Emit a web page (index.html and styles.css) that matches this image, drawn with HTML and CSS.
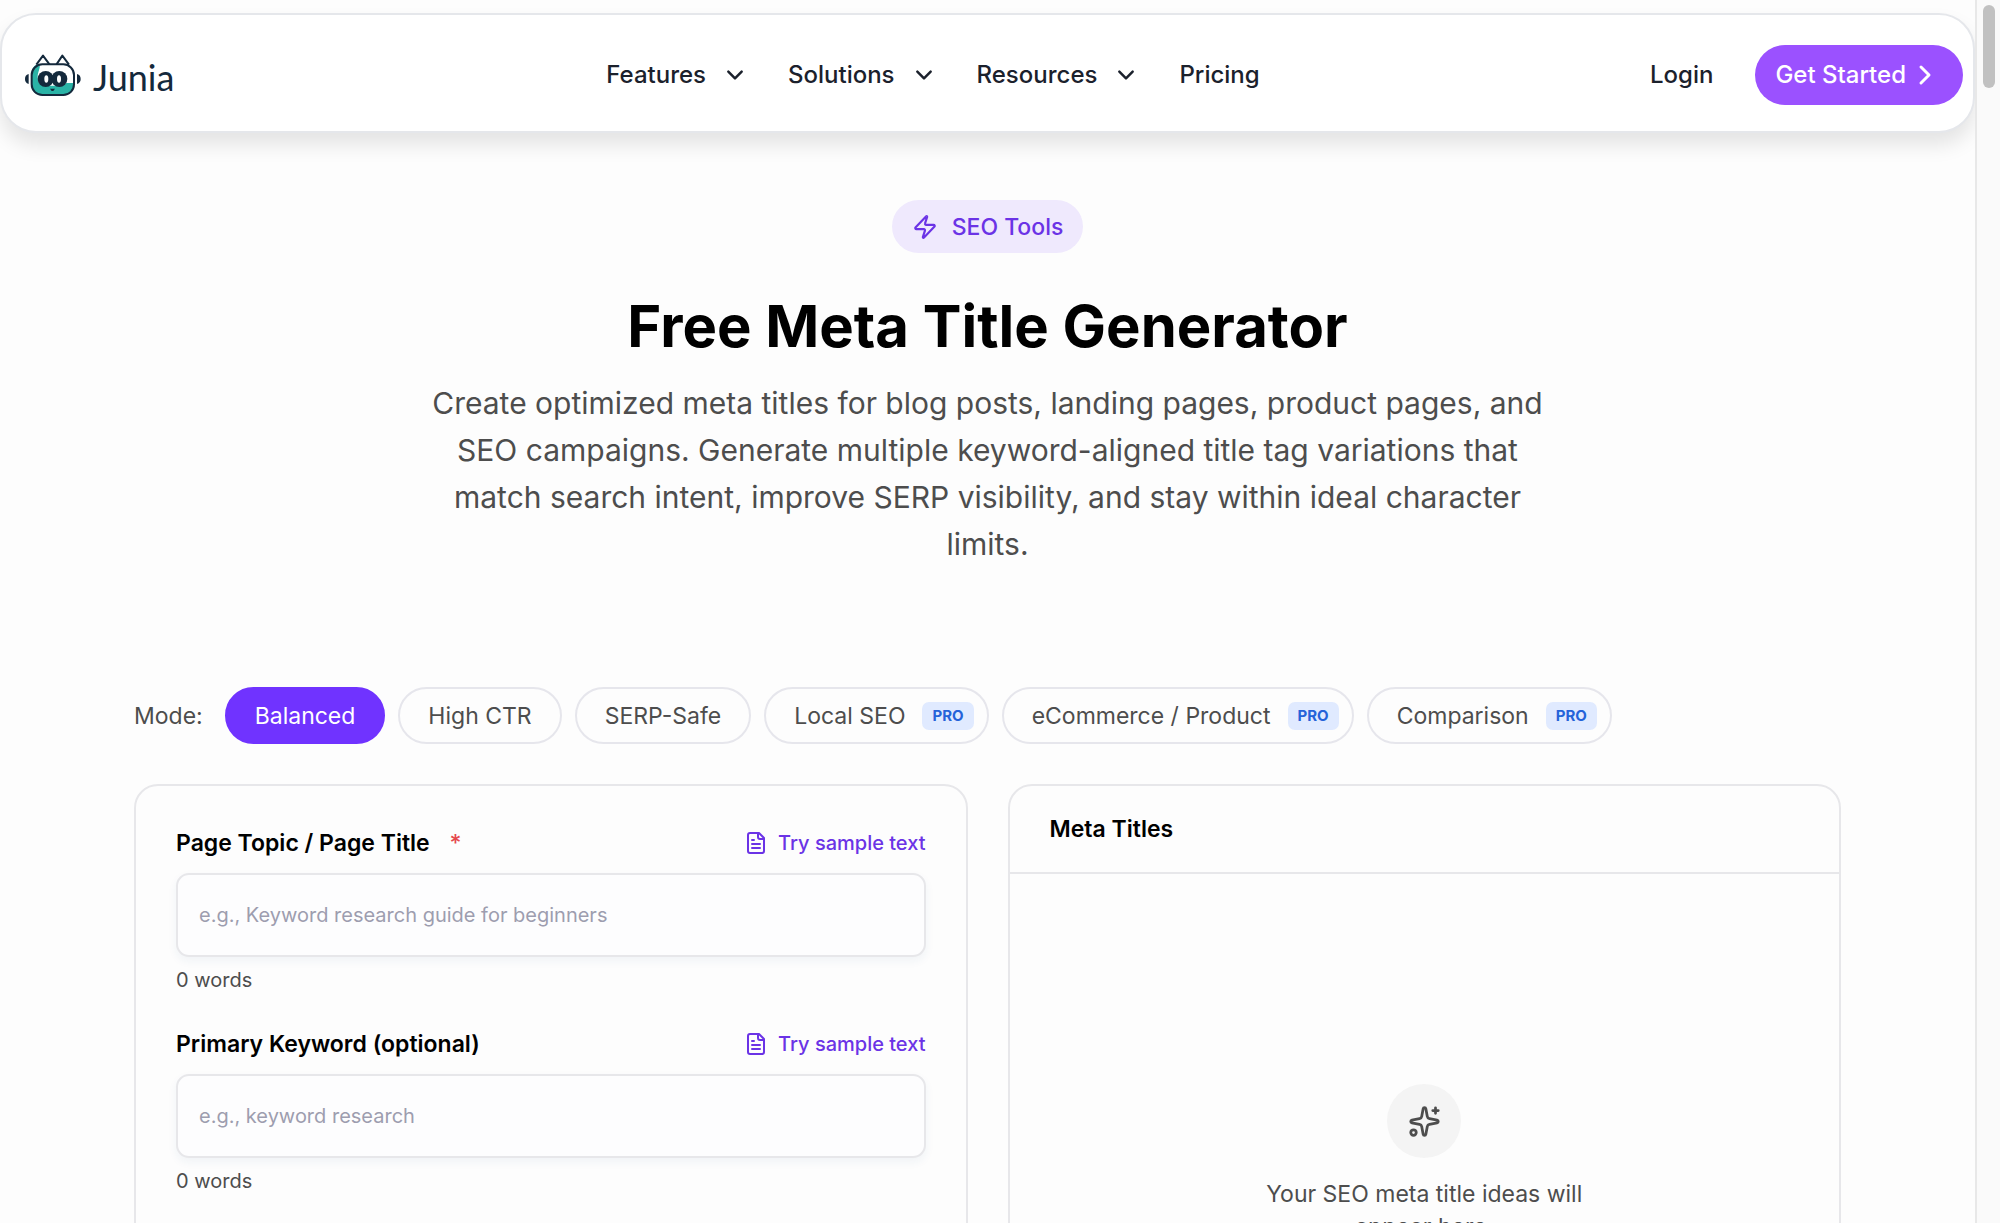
FILE: index.html
```html
<!DOCTYPE html>
<html lang="en">
<head>
  <meta charset="utf-8">
  <meta name="viewport" content="width=device-width, initial-scale=1">
  <title>Free Meta Title Generator</title>
  <link rel="stylesheet" href="styles.css">
</head>
<body>
  <!-- shared icons -->
  <svg class="sprite" aria-hidden="true">
    <symbol id="chevron-down" viewBox="0 0 24 24"><path d="M4 8l8 8 8-8"/></symbol>
    <symbol id="file-text" viewBox="0 0 24 24">
      <path d="M15 2H6a2 2 0 0 0-2 2v16a2 2 0 0 0 2 2h12a2 2 0 0 0 2-2V7Z"/>
      <path d="M14 2v4a2 2 0 0 0 2 2h4"/>
      <path d="M10 9H8M16 13H8M16 17H8"/>
    </symbol>
  </svg>

  <div class="page">
    <header class="header">
      <a href="#" class="logo">
        <svg class="logo-icon" viewBox="0 0 168 126" aria-hidden="true">
          <path d="M34 32L54 5l20 27M94 32l18-27 20 27" fill="#fff" stroke="#14293c" stroke-width="6" stroke-linejoin="round"/>
          <rect x="20" y="31" width="127" height="92" rx="32" fill="#fff"/>
          <path d="M44 31C28 32 20 42 20 60v33c0 20 12 30 32 30h63c20 0 32-10 32-32v-4h-20c-8 0-10 8-20 8H60C44 95 38 84 38 68c0-14 8-22 6-37z" fill="#2ab3a6"/>
          <rect x="20" y="31" width="127" height="92" rx="32" fill="none" stroke="#14293c" stroke-width="6"/>
          <circle cx="62" cy="75" r="24" fill="#14293c"/>
          <circle cx="103" cy="75" r="24" fill="#14293c"/>
          <ellipse cx="64" cy="75" rx="6" ry="11" fill="#fff"/>
          <ellipse cx="102" cy="75" rx="6" ry="11" fill="#fff"/>
          <path d="M75 104h15l-5 7h-5z" fill="#14293c"/>
          <path d="M11 60C3 62 0 68 0 75s3 13 11 15zM156 60c8 2 11 8 11 15s-3 13-11 15z" fill="#14293c"/>
        </svg>
        <span class="logo-text">Junia</span>
      </a>

      <nav class="nav">
        <button type="button" class="nav-item">Features <svg class="icon chevron"><use href="#chevron-down"/></svg></button>
        <button type="button" class="nav-item">Solutions <svg class="icon chevron"><use href="#chevron-down"/></svg></button>
        <button type="button" class="nav-item">Resources <svg class="icon chevron"><use href="#chevron-down"/></svg></button>
        <a href="#" class="nav-item">Pricing</a>
      </nav>

      <div class="account">
        <a href="#" class="login">Login</a>
        <a href="#" class="get-started">Get Started
          <svg class="icon arrow" viewBox="0 0 24 24"><path d="M8 4l8 8-8 8"/></svg>
        </a>
      </div>
    </header>

    <main class="main">
      <section class="hero">
        <a href="#" class="badge">
          <svg class="icon bolt" viewBox="0 0 24 24"><path d="M4 14a1 1 0 0 1-.78-1.63l9.9-10.2a.5.5 0 0 1 .86.46l-1.92 6.02A1 1 0 0 0 13 10h7a1 1 0 0 1 .78 1.63l-9.9 10.2a.5.5 0 0 1-.86-.46l1.92-6.02A1 1 0 0 0 11 14z"/></svg>
          SEO Tools
        </a>
        <h1>Free Meta Title Generator</h1>
        <p>Create optimized meta titles for blog posts, landing pages, product pages, and SEO campaigns. Generate multiple keyword-aligned title tag variations that match search intent, improve SERP visibility, and stay within ideal character limits.</p>
      </section>

      <div class="modes">
        <span class="modes-label">Mode:</span>
        <button type="button" class="mode active">Balanced</button>
        <button type="button" class="mode">High CTR</button>
        <button type="button" class="mode">SERP-Safe</button>
        <button type="button" class="mode mode-pro">Local SEO <span class="pro">PRO</span></button>
        <button type="button" class="mode mode-pro">eCommerce / Product <span class="pro">PRO</span></button>
        <button type="button" class="mode mode-pro">Comparison <span class="pro">PRO</span></button>
      </div>

      <div class="panels">
        <form class="panel form-panel">
          <div class="field">
            <div class="field-head">
              <label for="topic">Page Topic / Page Title <span class="required">*</span></label>
              <button type="button" class="sample"><svg class="icon file"><use href="#file-text"/></svg>Try sample text</button>
            </div>
            <input type="text" id="topic" name="topic" placeholder="e.g., Keyword research guide for beginners" required>
            <div class="count">0 words</div>
          </div>
          <div class="field">
            <div class="field-head">
              <label for="keyword">Primary Keyword (optional)</label>
              <button type="button" class="sample"><svg class="icon file"><use href="#file-text"/></svg>Try sample text</button>
            </div>
            <input type="text" id="keyword" name="keyword" placeholder="e.g., keyword research">
            <div class="count">0 words</div>
          </div>
        </form>

        <section class="panel">
          <h2>Meta Titles</h2>
          <div class="empty">
            <div class="empty-icon">
              <svg class="icon sparkle" viewBox="0 0 24 24">
                <path d="M11.017 2.814a1 1 0 0 1 1.966 0l1.051 5.558a2 2 0 0 0 1.594 1.594l5.558 1.051a1 1 0 0 1 0 1.966l-5.558 1.051a2 2 0 0 0-1.594 1.594l-1.051 5.558a1 1 0 0 1-1.966 0l-1.051-5.558a2 2 0 0 0-1.594-1.594l-5.558-1.051a1 1 0 0 1 0-1.966l5.558-1.051a2 2 0 0 0 1.594-1.594z"/>
                <path d="M20 2v4M22 4h-4"/>
                <circle cx="4" cy="20" r="2"/>
              </svg>
            </div>
            <p>Your SEO meta title ideas will appear here.</p>
          </div>
        </section>
      </div>
    </main>
  </div>

  <div class="scrollbar"><div class="thumb"></div></div>
</body>
</html>
```

FILE: styles.css
```css
* {
  box-sizing: border-box;
}

body {
  display: flex;
  height: 100vh;
  margin: 0;
  overflow: hidden;
  background: #fdfdfd;
  color: #000;
  font-family: Inter, sans-serif;
  font-size: 23px;
  line-height: 32px;
}

a {
  color: inherit;
  text-decoration: none;
}

button {
  padding: 0;
  border: none;
  background: none;
  color: inherit;
  font: inherit;
  cursor: pointer;
}

.sprite {
  display: none;
}

.icon {
  flex: none;
  width: 24px;
  height: 24px;
  fill: none;
  stroke: currentColor;
  stroke-width: 2;
  stroke-linecap: round;
  stroke-linejoin: round;
}

.page {
  flex: 1;
  min-width: 0;
  padding-top: 13px;
}

/* header */
.header {
  display: flex;
  align-items: center;
  justify-content: space-between;
  height: 120px;
  padding: 4px 10px 0 23px;
  border: 2px solid #e5e7eb;
  border-radius: 36px;
  background: #fff;
  box-shadow: 0 12px 20px rgba(0, 0, 0, 0.1);
  color: #1b212c;
  font-size: 24px;
  font-weight: 500;
}

.logo {
  display: flex;
  align-items: flex-end;
  gap: 12px;
  min-width: 234px;
}

.logo-icon {
  width: 56px;
  height: 42px;
}

.logo-text {
  color: #14293c;
  font-family: Lato, sans-serif;
  font-size: 36px;
  font-weight: 400;
  line-height: 38px;
}

.nav {
  display: flex;
}

.nav-item {
  display: flex;
  align-items: center;
  gap: 19px;
  padding-right: 43px;
}

.chevron {
  width: 20px;
  height: 20px;
  stroke-width: 3;
}

.account {
  display: flex;
  align-items: center;
  gap: 42px;
}

.get-started {
  display: flex;
  align-items: center;
  gap: 7px;
  height: 60px;
  padding: 0 26px 0 20px;
  border-radius: 30px;
  background: #9b51ff;
  color: #fff;
}

.arrow {
  stroke-width: 3;
}

/* hero */
.main {
  padding: 67px 134px 0;
}

.hero {
  display: flex;
  flex-direction: column;
  align-items: center;
  max-width: 1120px;
  margin: 0 auto 119px;
  text-align: center;
}

.badge {
  display: flex;
  align-items: center;
  gap: 14px;
  height: 53px;
  padding: 0 20px;
  border-radius: 27px;
  background: #efe9fd;
  color: #6b33e6;
  font-weight: 500;
}

.bolt {
  width: 26px;
  height: 26px;
}

h1 {
  margin: 36px 0 16px;
  font-size: 58px;
  font-weight: 700;
  line-height: 75px;
}

.hero p {
  margin: 0;
  color: #4d4d4d;
  font-size: 30px;
  line-height: 47px;
}

/* modes */
.modes {
  display: flex;
  flex-wrap: wrap;
  align-items: center;
  gap: 13px;
  margin-bottom: 40px;
  color: #4d4d4d;
}

.modes-label {
  margin-right: 9px;
}

.mode {
  display: flex;
  align-items: center;
  gap: 17px;
  height: 57px;
  padding: 0 28px;
  border: 2px solid #e6e6ec;
  border-radius: 29px;
}

.mode-pro {
  padding-right: 13px;
}

.active {
  border-color: #7033ff;
  background: #7033ff;
  color: #fff;
}

.pro {
  padding: 0 10px;
  border-radius: 7px;
  background: #e0eaff;
  color: #2563d9;
  font-size: 15px;
  font-weight: 700;
  line-height: 28px;
}

/* panels */
.panels {
  display: grid;
  grid-template-columns: 1fr 1fr;
  gap: 40px;
}

.panel {
  min-height: 800px;
  border: 2px solid #e7e7ea;
  border-radius: 24px;
}

.form-panel {
  padding: 41px 40px;
}

.field {
  margin-bottom: 33px;
}

.field-head {
  display: flex;
  align-items: center;
  justify-content: space-between;
  margin-bottom: 14px;
}

.field label {
  font-weight: 600;
}

.required {
  margin-left: 14px;
  color: #e5484d;
  font-weight: 500;
}

.sample {
  display: flex;
  align-items: center;
  gap: 10px;
  color: #6b33e6;
  font-size: 20px;
  font-weight: 500;
}

.field input {
  display: block;
  width: 100%;
  height: 84px;
  padding: 0 21px;
  border: 2px solid #e7e7ea;
  border-radius: 13px;
  background: #fdfdfe;
  box-shadow: 0 4px 10px rgba(30, 90, 130, 0.06);
  font-family: inherit;
  font-size: 20px;
}

.field input::placeholder {
  color: #9d9daf;
}

.count {
  margin-top: 9px;
  color: #4d4d4d;
  font-size: 20px;
  line-height: 29px;
}

h2 {
  margin: 0;
  padding: 27px 40px;
  border-bottom: 2px solid #e7e7ea;
  font-size: 23px;
  font-weight: 600;
  line-height: 32px;
}

.empty {
  display: flex;
  flex-direction: column;
  align-items: center;
  padding-top: 210px;
  color: #4d4d4d;
  text-align: center;
}

.empty-icon {
  display: flex;
  align-items: center;
  justify-content: center;
  width: 74px;
  height: 74px;
  border-radius: 50%;
  background: #f4f4f4;
}

.sparkle {
  width: 33px;
  height: 33px;
}

.empty p {
  max-width: 340px;
  margin: 20px 0 0;
  line-height: 33px;
}

/* scroll rail at the window edge */
.scrollbar {
  width: 25px;
  padding: 5px 5px 0 6px;
  border-left: 2px solid #e8e8e8;
  background: #fafafa;
}

.thumb {
  height: 83px;
  border-radius: 7px;
  background: #c1c1c1;
}
```
